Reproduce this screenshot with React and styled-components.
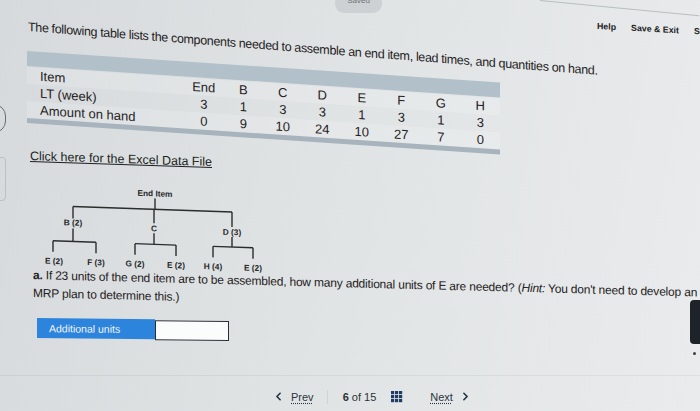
import React from "react";
import styled, { createGlobalStyle } from "styled-components";
import { ChevronLeft, ChevronRight } from "lucide-react";

/* --- Data --- */
const columns = ["End", "B", "C", "D", "E", "F", "G", "H"];
const leadTimes = [3, 1, 3, 3, 1, 3, 1, 3];
const onHand = [0, 9, 10, 24, 10, 27, 7, 0];

const treeLines = [
  [125, 14, 125, 25],
  [43, 25, 202, 25],
  [43, 25, 43, 37],
  [124, 25, 124, 39],
  [202, 25, 202, 40],
  [43, 47, 43, 60],
  [23, 60, 66, 60],
  [23, 60, 23, 71],
  [66, 60, 66, 71],
  [124, 49, 124, 60],
  [105, 60, 146, 60],
  [105, 60, 105, 71],
  [146, 60, 146, 71],
  [202, 50, 202, 60],
  [183, 60, 223, 60],
  [183, 60, 183, 71],
  [223, 60, 223, 71],
];

const treeLabels = [
  { x: 125, y: 12, text: "End Item" },
  { x: 43, y: 44, text: "B (2)" },
  { x: 124, y: 47, text: "C" },
  { x: 202, y: 48, text: "D (3)" },
  { x: 24, y: 83, text: "E (2)" },
  { x: 66, y: 83, text: "F (3)" },
  { x: 105, y: 83, text: "G (2)" },
  { x: 146, y: 83, text: "E (2)" },
  { x: 183, y: 83, text: "H (4)" },
  { x: 223, y: 83, text: "E (2)" },
];

/* --- Styles --- */
const GlobalStyle = createGlobalStyle`
  html, body {
    margin: 0;
    padding: 0;
  }
  body {
    background: #e2e5e6;
    font-family: "Liberation Sans", Arial, sans-serif;
    color: #1f2123;
  }
`;

const Page = styled.div`
  position: relative;
  width: 700px;
  height: 411px;
  overflow: hidden;
  display: flex;
  flex-direction: column;
  background: linear-gradient(100deg, #d6dadc 0%, #e0e3e4 45%, #e9ebec 100%);
`;

const TopStrip = styled.div`
  display: flex;
  height: 13px;
  padding-left: 335px;
`;

const SavedPill = styled.div`
  width: 47px;
  height: 19px;
  margin-top: -6px;
  border-radius: 9px;
  background: #cdd1d3;
  color: #6d7275;
  font-size: 8px;
  line-height: 14px;
  text-align: center;
`;

const TopEdge = styled.div`
  margin-left: auto;
  width: 160px;
  height: 1px;
  background: #b9bec1;
  transform: rotate(5.5deg);
  transform-origin: 0 0;
`;

const HeadRow = styled.div`
  display: flex;
  margin-top: 7px;
  padding-left: 28px;
`;

const Title = styled.h1`
  flex: 1;
  min-width: 0;
  margin: 0;
  font-size: 12.5px;
  line-height: 15px;
  font-weight: 400;
  letter-spacing: -0.35px;
  white-space: nowrap;
  transform: skewY(4.4deg);
  transform-origin: 0 0;
`;

const HeaderLinks = styled.nav`
  flex: none;
  display: flex;
  gap: 15px;
  width: 103px;
  height: 12px;
  overflow: visible;
  white-space: nowrap;
  transform: skewY(3deg);
  transform-origin: 0 0;
`;

const HeaderLink = styled.span`
  font-size: 8.8px;
  line-height: 12px;
  font-weight: 700;
  color: #222;
`;

const Table = styled.div`
  margin: 16px 0 0 27px;
  width: 473px;
  transform: skewY(3.8deg);
  transform-origin: 0 0;
`;

const TableBand = styled.div`
  height: 15px;
  margin-bottom: 1px;
  background: #b2c0c9;
`;

const TableRow = styled.div`
  display: grid;
  grid-template-columns: 157px repeat(8, 39.5px);
  align-items: center;
  height: 17px;
  font-size: 13px;
  background: ${(p) => (p.$shade ? "rgba(255, 255, 255, 0.16)" : "transparent")};
`;

const RowLabel = styled.span`
  padding-left: 13px;
`;

const Cell = styled.span`
  text-align: center;
`;

const TableFoot = styled.div`
  height: 5px;
  background: #a8b4bd;
`;

const DataLink = styled.a`
  align-self: flex-start;
  margin: 26px 0 0 30px;
  font-size: 12.5px;
  line-height: 15px;
  color: #1d1f22;
  text-decoration: underline;
  transform: skewY(1.9deg);
  transform-origin: 0 0;
`;

const Tree = styled.svg`
  display: block;
  flex: none;
  margin: 16px 0 0 30px;
  transform: skewY(2deg);
  transform-origin: 0 0;
`;

const Question = styled.p`
  margin: -2px 0 0 33px;
  font-size: 12px;
  line-height: 18px;
  letter-spacing: -0.2px;
  white-space: nowrap;
  transform: skewY(1.5deg);
  transform-origin: 0 0;

  b {
    font-weight: 700;
  }
`;

const AnswerRow = styled.div`
  display: flex;
  margin: 16px 0 0 37px;
  transform: skewY(0.6deg);
  transform-origin: 0 0;
`;

const AnswerLabel = styled.div`
  width: 106px;
  height: 20px;
  padding-left: 12px;
  background: #2d84dc;
  color: #f2f6fb;
  font-size: 10.5px;
  line-height: 20px;
`;

const AnswerInput = styled.div`
  box-sizing: border-box;
  width: 74px;
  height: 20px;
  margin-top: 1px;
  background: #fbfcfc;
  border: 1.5px solid #2b2f33;
`;

const Footer = styled.footer`
  display: flex;
  align-items: center;
  height: 36px;
  margin-top: auto;
  padding: 6px 0 0 272px;
  box-sizing: border-box;
  border-top: 1px solid rgba(0, 0, 0, 0.05);
  font-size: 11px;
  color: #2c3238;
`;

const NavLink = styled.span`
  text-decoration: underline dotted;
  text-underline-offset: 2px;
  color: #2a3440;
  margin: ${(p) => p.$margin};
`;

const Divider = styled.span`
  width: 1px;
  height: 14px;
  margin: 0 15px 0 13px;
  background: #cfd3d5;
`;

const PageCount = styled.span`
  b {
    font-weight: 700;
  }
`;

const GridIcon = styled.svg`
  display: block;
  margin-left: 15px;
`;

const SideTab = styled.div`
  position: absolute;
  right: 0;
  top: 300px;
  width: 10px;
  height: 44px;
  border-radius: 4px 0 0 4px;
  background: #1d2328;

  &::after {
    content: "";
    position: absolute;
    left: 3px;
    top: 52px;
    width: 3px;
    height: 3px;
    border-radius: 50%;
    background: #3a3f44;
  }
`;

const EdgeBracket = styled.div`
  position: absolute;
  left: -8px;
  top: ${(p) => p.$top}px;
  width: 12px;
  height: ${(p) => p.$height}px;
  border: 1.5px solid ${(p) => p.$color};
  border-radius: ${(p) => p.$radius};
`;

/* --- Component --- */
export default function App() {
  return (
    <>
      <GlobalStyle />
      <Page>
        <TopStrip>
          <SavedPill>Saved</SavedPill>
          <TopEdge />
        </TopStrip>

        <HeadRow>
          <Title>
            The following table lists the components needed to assemble an end
            item, lead times, and quantities on hand.
          </Title>
          <HeaderLinks>
            <HeaderLink>Help</HeaderLink>
            <HeaderLink>Save &amp; Exit</HeaderLink>
            <HeaderLink>Submit</HeaderLink>
          </HeaderLinks>
        </HeadRow>

        <Table>
          <TableBand />
          <TableRow $shade>
            <RowLabel>Item</RowLabel>
            {columns.map((c) => (
              <Cell key={c}>{c}</Cell>
            ))}
          </TableRow>
          <TableRow>
            <RowLabel>LT (week)</RowLabel>
            {leadTimes.map((v, i) => (
              <Cell key={i}>{v}</Cell>
            ))}
          </TableRow>
          <TableRow $shade>
            <RowLabel>Amount on hand</RowLabel>
            {onHand.map((v, i) => (
              <Cell key={i}>{v}</Cell>
            ))}
          </TableRow>
          <TableFoot />
        </Table>

        <DataLink href="#">Click here for the Excel Data File</DataLink>

        <Tree width="260" height="88" viewBox="0 0 260 88">
          <g stroke="#2a2c2e" strokeWidth="1.4" fill="none">
            {treeLines.map(([x1, y1, x2, y2], i) => (
              <line key={i} x1={x1} y1={y1} x2={x2} y2={y2} />
            ))}
          </g>
          <g
            fontFamily="Liberation Sans, Arial, sans-serif"
            fontSize="8.3"
            fontWeight="700"
            fill="#26282a"
            textAnchor="middle"
          >
            {treeLabels.map((l, i) => (
              <text key={i} x={l.x} y={l.y}>
                {l.text}
              </text>
            ))}
          </g>
        </Tree>

        <Question>
          <b>a.</b> If 23 units of the end item are to be assembled, how many
          additional units of E are needed? (<i>Hint:</i> You don't need to
          develop an
          <br />
          MRP plan to determine this.)
        </Question>

        <AnswerRow>
          <AnswerLabel>Additional units</AnswerLabel>
          <AnswerInput />
        </AnswerRow>

        <Footer>
          <ChevronLeft size={13} strokeWidth={3} color="#243345" />
          <NavLink $margin="0 0 0 6px">Prev</NavLink>
          <Divider />
          <PageCount>
            <b>6</b> of 15
          </PageCount>
          <GridIcon width="12" height="12" viewBox="0 0 12 12">
            {[0, 4, 8].map((y) =>
              [0, 4, 8].map((x) => (
                <rect key={`${x}-${y}`} x={x} y={y} width="3.2" height="3.2" fill="#1f3b63" />
              ))
            )}
          </GridIcon>
          <NavLink $margin="0 6px 0 27px">Next</NavLink>
          <ChevronRight size={13} strokeWidth={3} color="#243345" />
        </Footer>

        <SideTab />
        <EdgeBracket $top={104} $height={27} $color="#6b6f72" $radius="0 12px 12px 0" />
        <EdgeBracket $top={157} $height={42} $color="#bcc0c2" $radius="0 4px 4px 0" />
      </Page>
    </>
  );
}
